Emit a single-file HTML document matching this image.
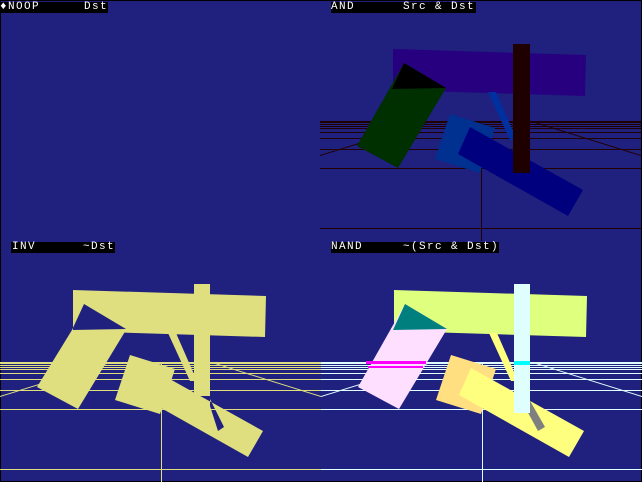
<!DOCTYPE html>
<html><head><style>
body{margin:0;background:#000;width:642px;height:482px;overflow:hidden;position:relative}
.l{position:absolute;background:#000;height:11px}
.t{position:absolute;color:#fff;font:11px/11px "Liberation Mono",monospace;white-space:pre;letter-spacing:1.4px}
</style></head><body>
<svg width="642" height="482" style="position:absolute;left:0;top:0">
<defs>
<g id="grid">
<g shape-rendering="crispEdges">
<rect x="0" y="121" width="321" height="2"/><rect x="0" y="124" width="321" height="1"/><rect x="0" y="126" width="321" height="1"/><rect x="0" y="128" width="321" height="1"/><rect x="0" y="132" width="321" height="1"/><rect x="0" y="138" width="321" height="1"/><rect x="0" y="149" width="321" height="1"/><rect x="0" y="168" width="321" height="1"/><rect x="0" y="228" width="321" height="1"/><rect x="161" y="122" width="1" height="119"/>
</g>
<polygon points="0,155 107,122 107,123 0,156"/><polygon points="215,122 321,155 321,156 215,123"/>
</g>
</defs>
<rect x="1" y="1" width="640" height="480" fill="#20207f"/>
<g transform="translate(320,0)">
<use href="#grid" fill="#200000"/>
<polygon points="73,49 266,55 265,96 73,90" fill="#27007f"/>
<polygon points="168,92 176,92 197,140 190,140" fill="#0030a0"/>
<polygon points="84,63 126,88 78,168 37,146" fill="#002f00"/>
<polygon points="84,63 126,88 72,89" fill="#000"/>
<polygon points="130,114 175,128 160,173 115,159" fill="#003090"/>
<polygon points="150,127 263,190 248,216 138,154" fill="#00007f"/>
<rect x="193" y="44" width="17" height="129" fill="#1f0000"/>
</g>
<g transform="translate(0,241)" fill="#dfdf7f">
<use href="#grid"/>
<path fill-rule="evenodd" d="M73,49 L266,55 265,96 73,90Z M84,63 L126,88 72,89Z"/>
<polygon points="168,92 176,92 197,140 190,140"/>
<polygon points="72,89 126,89 78,168 37,146"/>
<polygon points="130,114 175,128 160,173 115,159"/>
<path fill-rule="evenodd" d="M150,127 L263,190 248,216 138,154Z M210,158 L224,186 218,190 210,165Z"/>
<rect x="194" y="43" width="16" height="112"/>
</g>
<g transform="translate(321,241)">
<use href="#grid" fill="#dfffff"/>
<polygon points="73,49 266,55 265,96 73,90" fill="#dfff7f"/>
<polygon points="168,92 176,92 197,140 190,140" fill="#ffff7f"/>
<polygon points="84,63 126,88 78,168 37,146" fill="#ffdfff"/>
<polygon points="84,63 126,88 72,89" fill="#007f7f"/>
<rect x="45" y="120" width="60" height="3" fill="#ff00ff"/><rect x="47" y="125" width="55" height="2" fill="#ff00ff"/>
<polygon points="130,114 175,128 160,173 115,159" fill="#ffdf7f"/>
<polygon points="150,127 263,190 248,216 138,154" fill="#ffff7f"/>
<polygon points="208,158 224,186 217,190 205,168" fill="#7f7f7f"/>
<rect x="193" y="43" width="16" height="129" fill="#dfffff"/>
<rect x="193" y="120" width="16" height="4" fill="#00ffff"/>
</g>
</svg>
<div class="l" style="left:0;top:2px;width:108px"></div>
<div class="t" style="left:0;top:2px">&#9830;</div>
<div class="t" style="left:8px;top:2px">NOOP</div>
<div class="t" style="left:84px;top:2px">Dst</div>
<div class="l" style="left:331px;top:2px;width:145px"></div>
<div class="t" style="left:331px;top:2px">AND</div>
<div class="t" style="left:403px;top:2px">Src &amp; Dst</div>
<div class="l" style="left:11px;top:242px;width:104px"></div>
<div class="t" style="left:12px;top:242px">INV</div>
<div class="t" style="left:83px;top:242px">~Dst</div>
<div class="l" style="left:331px;top:242px;width:168px"></div>
<div class="t" style="left:331px;top:242px">NAND</div>
<div class="t" style="left:403px;top:242px">~(Src &amp; Dst)</div>
</body></html>
